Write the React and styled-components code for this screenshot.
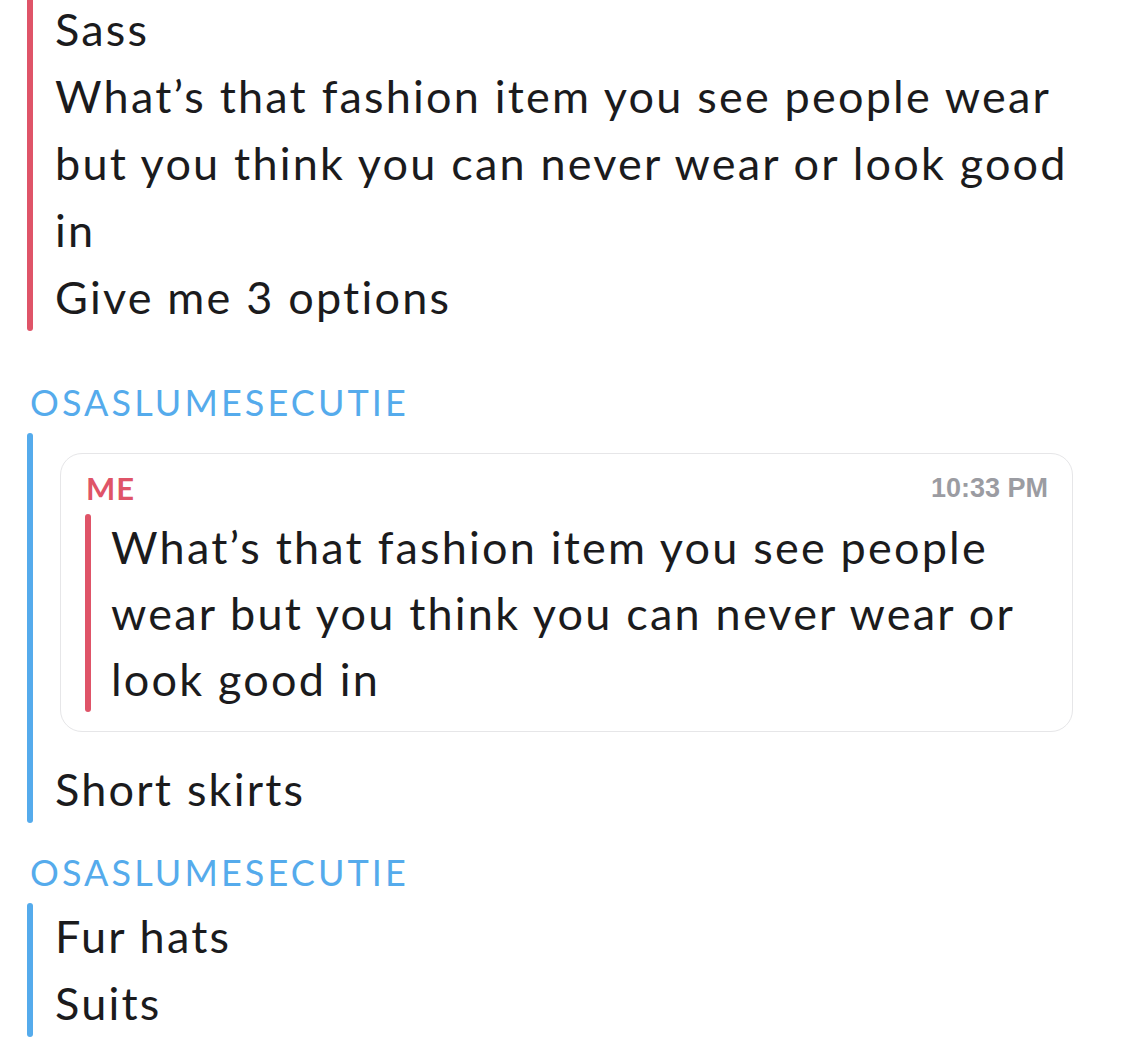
import React from 'react';
import styled, { createGlobalStyle } from 'styled-components';

const GlobalStyle = createGlobalStyle`
  html, body {
    margin: 0;
    padding: 0;
    background: #ffffff;
  }
  body {
    font-family: Lato, "Noto Sans", "Liberation Sans", sans-serif;
    color: #1b1b1d;
    -webkit-font-smoothing: antialiased;
  }
`;

const RED = '#df5468';
const BLUE = '#55abec';

const Chat = styled.div`
  width: 1125px;
  margin-top: -4px;
  padding: 0 0 0 27px;
  box-sizing: border-box;
  overflow: hidden;
`;

const Group = styled.div`
  display: flex;
`;

const Bar = styled.div`
  width: 6px;
  flex-shrink: 0;
  border-radius: 3px;
  background: ${(p) => p.$color};
`;

const Body = styled.div`
  flex: 1;
  padding-left: 22px;
  min-width: 0;
`;

const Line = styled.div`
  font-size: 45px;
  line-height: 67px;
  letter-spacing: 2.2px;
  white-space: nowrap;
`;

const Sender = styled.div`
  margin-top: ${(p) => p.$top}px;
  margin-bottom: 11px;
  font-size: 36px;
  line-height: 40px;
  letter-spacing: 3.1px;
  color: ${BLUE};
  padding-left: 3px;
`;

const QuoteCard = styled.div`
  margin: 20px 52px 24px 5px;
  padding: 17px 24px 19px 24px;
  border: 1px solid #e6e6e8;
  border-radius: 22px;
`;

const QuoteHeader = styled.div`
  display: flex;
  justify-content: space-between;
  align-items: center;
  height: 34px;
  margin-bottom: 9px;
`;

const QuoteName = styled.span`
  font-weight: 700;
  font-size: 31px;
  letter-spacing: 1px;
  color: ${RED};
  padding-left: 1px;
`;

const QuoteTime = styled.span`
  font-family: "Liberation Sans", Arial, sans-serif;
  font-weight: 700;
  font-size: 27px;
  color: #9b9ca2;
`;

const QuoteBody = styled.div`
  display: flex;
`;

const QuoteText = styled.div`
  padding-left: 20px;
`;

const QuoteLine = styled(Line)`
  line-height: 66px;
`;

const first = [
  'Sass',
  'What\u2019s that fashion item you see people wear',
  'but you think you can never wear or look good',
  'in',
  'Give me 3 options',
];

const quoted = [
  'What\u2019s that fashion item you see people',
  'wear but you think you can never wear or',
  'look good in',
];

const Message = ({ color, lines }) => (
  <Group>
    <Bar $color={color} />
    <Body>
      {lines.map((l, i) => (
        <Line key={i}>{l}</Line>
      ))}
    </Body>
  </Group>
);

export default function App() {
  return (
    <Chat>
      <GlobalStyle />
      <Message color={RED} lines={first} />

      <Sender $top={51}>OSASLUMESECUTIE</Sender>
      <Group>
        <Bar $color={BLUE} />
        <Body>
          <QuoteCard>
            <QuoteHeader>
              <QuoteName>ME</QuoteName>
              <QuoteTime>10:33 PM</QuoteTime>
            </QuoteHeader>
            <QuoteBody>
              <Bar $color={RED} />
              <QuoteText>
                {quoted.map((l, i) => (
                  <QuoteLine key={i}>{l}</QuoteLine>
                ))}
              </QuoteText>
            </QuoteBody>
          </QuoteCard>
          <Line>Short skirts</Line>
        </Body>
      </Group>

      <Sender $top={29}>OSASLUMESECUTIE</Sender>
      <Message color={BLUE} lines={['Fur hats', 'Suits']} />
    </Chat>
  );
}
